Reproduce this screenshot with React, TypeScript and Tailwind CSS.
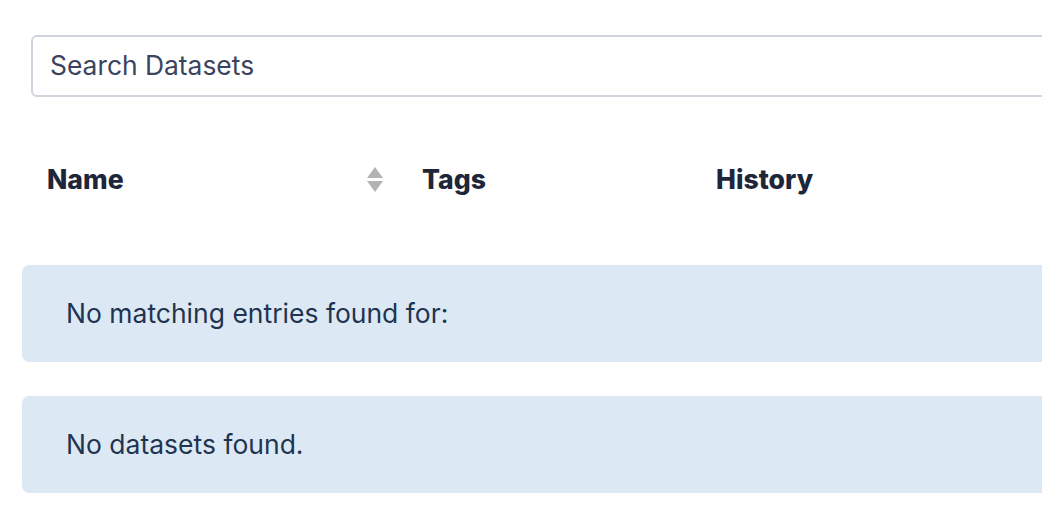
const SortIcon: React.FC = () => (
  <svg width="16" height="26" viewBox="0 0 16 26" className="shrink-0">
    <path d="M8 0 L16 11 L0 11 Z" fill="#b3b3b3" />
    <path d="M0 14 L16 14 L8 25 Z" fill="#b3b3b3" />
  </svg>
);

const Alert: React.FC<{ text: string }> = ({ text }) => (
  <div className="w-[1100px] h-[97px] rounded-[7px] bg-[#dce9f5] flex items-center pl-[44px] text-[26.5px] text-[#1f3450]">
    {text}
  </div>
);

const App: React.FC = () => {
  return (
    <div
      className="w-[1042px] h-[512px] overflow-hidden bg-white"
      style={{ fontFamily: "Inter, 'Noto Sans', sans-serif" }}
    >
      <div className="pl-[22px] pt-[35px]">
        <div className="ml-[9px] w-[1100px] h-[62px] rounded-[6px] border-2 border-[#cfd4dd] flex items-center pl-[17px] text-[26.4px] text-[#3a445e]">
          Search Datasets
        </div>

        <div className="flex items-center h-[64px] mt-[51px] text-[26.6px] font-extrabold text-[#1e2639]">
          <div className="w-[375px] flex items-center justify-between pl-[25px] pr-[14px]">
            <span>Name</span>
            <SortIcon />
          </div>
          <div className="w-[294px] pl-[25px]">Tags</div>
          <div className="pl-[25px]">History</div>
        </div>

        <div className="mt-[53px] flex flex-col gap-[34px]">
          <Alert text="No matching entries found for:" />
          <Alert text="No datasets found." />
        </div>
      </div>
    </div>
  );
};

export default App;
